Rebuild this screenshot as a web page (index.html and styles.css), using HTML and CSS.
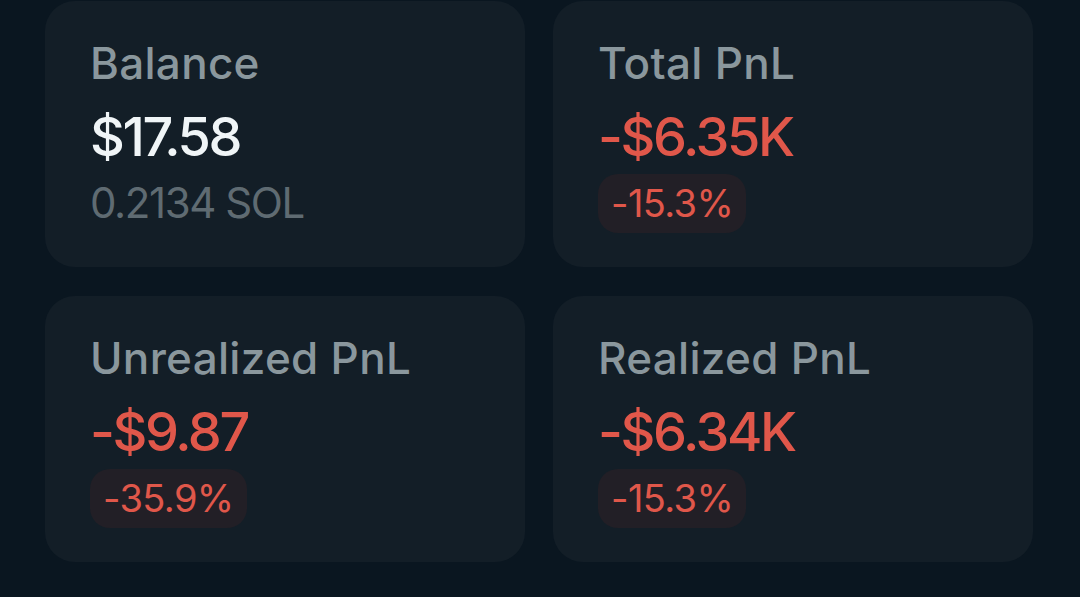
FILE: index.html
```html
<!DOCTYPE html>
<html>
<head>
<meta charset="utf-8">
<link rel="stylesheet" href="styles.css">
</head>
<body>
<div class="grid">
  <div class="card">
    <div class="label">Balance</div>
    <div class="value white">$17.58</div>
    <div class="sub">0.2134 SOL</div>
  </div>
  <div class="card">
    <div class="label">Total PnL</div>
    <div class="value red">-$6.35K</div>
    <div class="badge">-15.3%</div>
  </div>
  <div class="card">
    <div class="label">Unrealized PnL</div>
    <div class="value red">-$9.87</div>
    <div class="badge">-35.9%</div>
  </div>
  <div class="card">
    <div class="label">Realized PnL</div>
    <div class="value red">-$6.34K</div>
    <div class="badge">-15.3%</div>
  </div>
</div>
</body>
</html>
```
FILE: styles.css
```css
html, body {
  margin: 0;
  padding: 0;
  background: #0a1620;
  height: 100%;
}
body {
  font-family: Inter, "Noto Sans", sans-serif;
  overflow: hidden;
}
.grid {
  display: grid;
  grid-template-columns: 480px 480px;
  grid-auto-rows: 266px;
  column-gap: 28px;
  row-gap: 29px;
  padding: 1px 0 0 45px;
}
.card {
  background: #131e27;
  border-radius: 30px;
  padding: 34px 45px 0 45px;
  display: flex;
  flex-direction: column;
  align-items: flex-start;
}
.label {
  font-size: 44px;
  font-weight: 500;
  line-height: 56px;
  letter-spacing: 0.3px;
  color: #8a979d;
}
.value {
  font-size: 54px;
  font-weight: 500;
  line-height: 70px;
  letter-spacing: -2.4px;
  margin-top: 11px;
}
.white { color: #f0f5f7; }
.red { color: #e0574a; }
.sub {
  margin-top: 3px;
  font-size: 42px;
  line-height: 56px;
  letter-spacing: -1.4px;
  color: #5f6b72;
}
.badge {
  margin-top: 2px;
  background: #221f26;
  color: #e0574a;
  font-size: 38px;
  line-height: 59px;
  letter-spacing: -0.6px;
  padding: 0 13px;
  border-radius: 20px;
}
```
